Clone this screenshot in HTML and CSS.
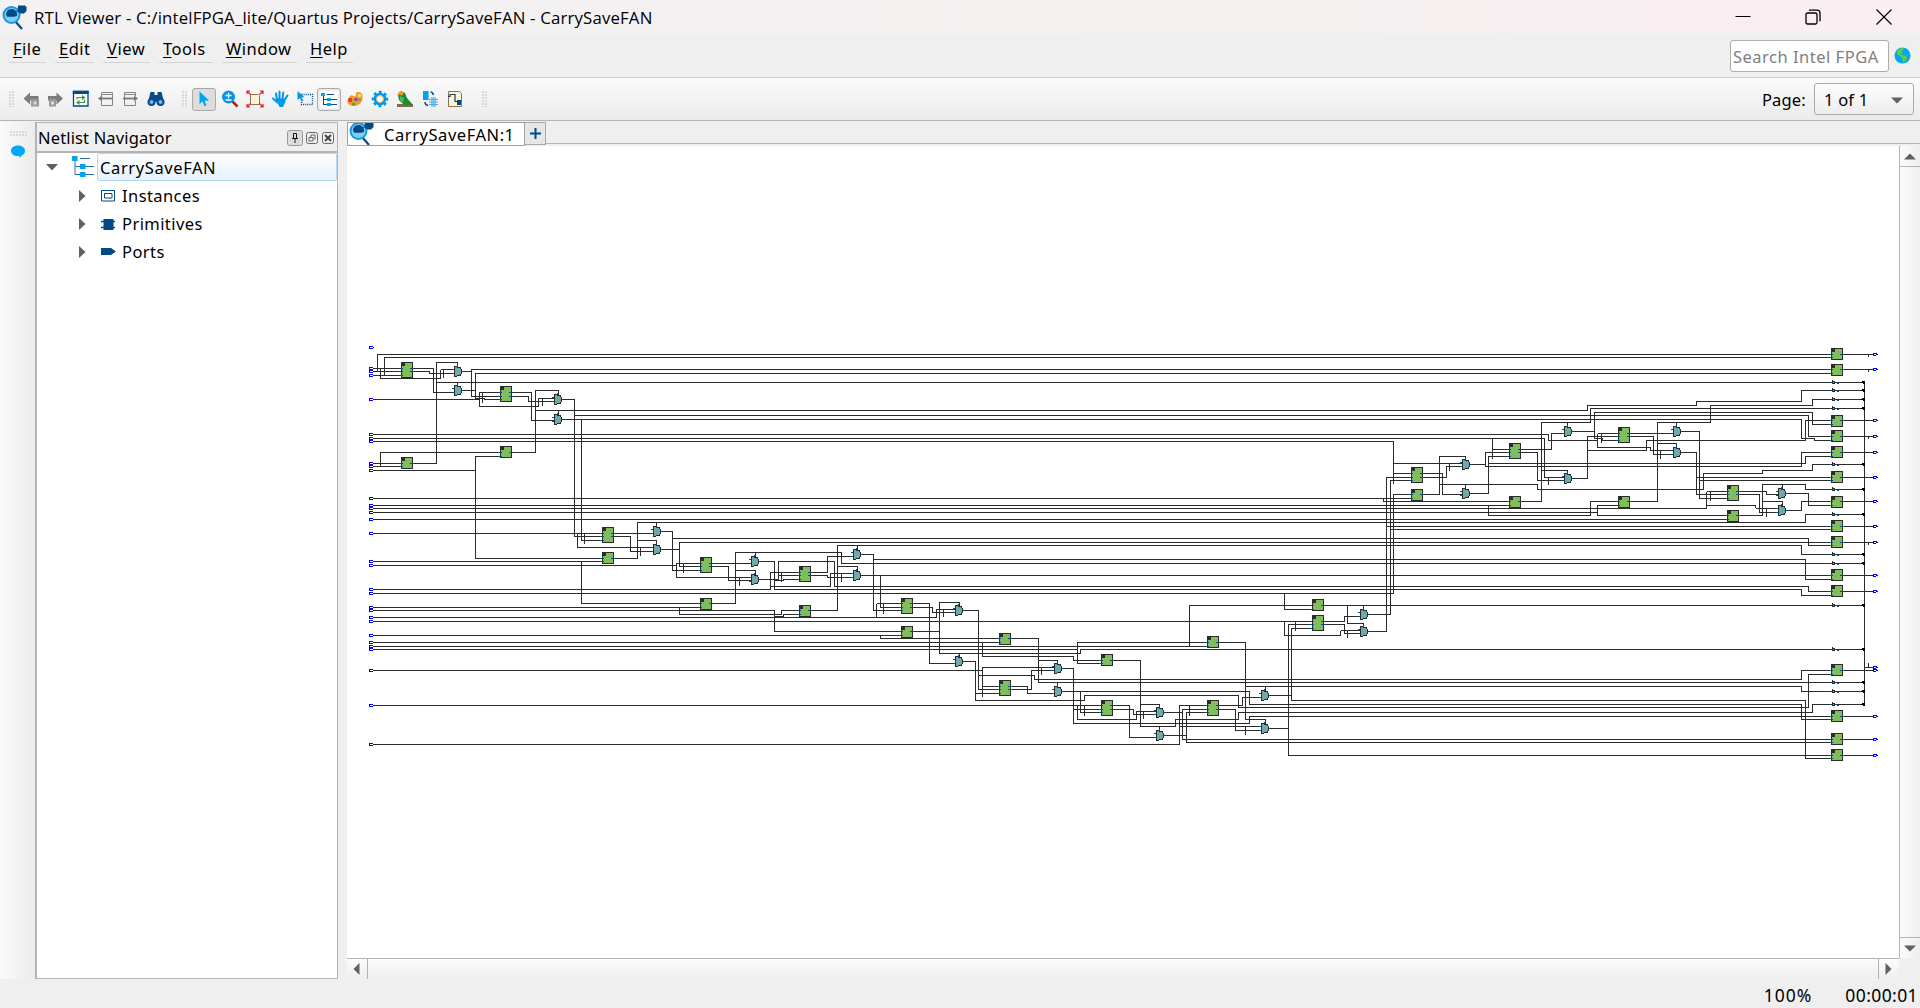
FILE: index.html
```html
<!DOCTYPE html>
<html lang="en">
<head>
<meta charset="utf-8">
<title>RTL Viewer - CarrySaveFAN</title>
<link rel="stylesheet" href="styles.css">
</head>
<body>
<svg class="defs" width="0" height="0">
  <defs>
    <symbol id="app-logo" viewBox="0 0 25 25">
      <path d="M13 16 20 24" stroke="#0a4b8c" stroke-width="2.2"/>
      <circle cx="9.500" cy="10" r="8" fill="#7fcdf5" stroke="#1598dc" stroke-width="2"/>
      <path d="M4 9.500a5.600 6 0 0 1 11-1v2.500l-3 .8H5z" fill="#004a86"/>
      <path d="M14 7 18 4" stroke="#0a4b8c"/>
      <path d="M16 .5h7l1.500 1.500v4L22 8.500h-4L15.500 6z" fill="#004a86"/>
    </symbol>
    <symbol id="tree-icon" viewBox="0 0 22 22">
      <path d="M3 5v13.500h5M3 10.500h5M8 2.500h10M13 10.500h9M13 18.500h9" fill="none" stroke="#2d6da3"/>
      <path d="M0 0h5.500v5H0zM8 8h5.500v5H8zM8 16h5.500v5H8z" fill="#00a3ee"/>
    </symbol>
  </defs>
</svg>

<header class="titlebar">
  <svg class="title-logo" width="25" height="25"><use href="#app-logo"/></svg>
  <span class="title-text">RTL Viewer - C:/intelFPGA_lite/Quartus Projects/CarrySaveFAN - CarrySaveFAN</span>
  <div class="window-controls">
    <svg width="16" height="16" viewBox="0 0 16 16"><path d="M.5 7.500h15" stroke="#000"/></svg>
    <svg width="16" height="16" viewBox="0 0 16 16" fill="none" stroke="#000" stroke-width="1.300"><rect x="1" y="4" width="11" height="11" rx="1.500"/><path d="M4 1.200h8a3 3 0 0 1 3 3v8"/></svg>
    <svg width="16" height="16" viewBox="0 0 16 16" stroke="#000" stroke-width="1.200"><path d="M.5.5l15 15M15.500.5l-15 15"/></svg>
  </div>
</header>

<nav class="menubar">
  <a class="menu m-file"><u>F</u>ile</a>
  <a class="menu m-edit"><u>E</u>dit</a>
  <a class="menu m-view"><u>V</u>iew</a>
  <a class="menu m-tools"><u>T</u>ools</a>
  <a class="menu m-window"><u>W</u>indow</a>
  <a class="menu m-help"><u>H</u>elp</a>
  <div class="search">Search Intel FPGA</div>
  <svg class="globe" width="17" height="17" viewBox="0 0 17 17"><circle cx="8.500" cy="8.500" r="8" fill="#00a8f5"/><path d="M3 4C4 2 7 1 9.500 1L9 3 7.500 4 9 6 6 7 8 8l5 1.500v2L9.500 16 8 11 5.500 8.500 3 7z" fill="#5fcf3f"/></svg>
</nav>

<div class="toolbar">
  <i class="grip"></i>
  <div class="tools first">
    <span class="tool"><svg width="20" height="20" viewBox="0 0 20 20"><path d="M2.500 9.500 9 3.500V7H17.500v4.500H9v4z" fill="#7c7c7c"/><path d="M10 10h8v7.500h-8z" fill="#999"/><path d="M12.500 12.500h3v3h-3z" fill="#ddd"/></svg></span>
    <span class="tool"><svg width="20" height="20" viewBox="0 0 20 20"><path d="M17 9.500 10.500 3.500V7H2v4.500h8.500v4z" fill="#7c7c7c"/><path d="M3 10h7v7.500H3z" fill="#999"/><path d="M5 12.500h3v3H5z" fill="#ddd"/></svg></span>
    <span class="tool"><svg width="18" height="18" viewBox="0 0 18 18"><path d="M1.500 1.500h14.500v14.500H1.500z" fill="#fff" stroke="#004a86" stroke-width="1.300"/><path d="M.8.800h15.900v3.200H.8z" fill="#004a86"/><path d="M5 9.500V7.500h6M12.500 9.500v3H6" fill="none" stroke="#3a983c" stroke-width="1.200"/><path d="M10 5l3.500 2.500L10 10zM7.500 10 4 12.500 7.500 15z" fill="#3a983c"/></svg></span>
    <span class="tool"><svg width="18" height="18" viewBox="0 0 18 18" fill="none" stroke="#858585"><path d="M4.500 6V2.500h11v13h-11V11M5 4.500h10"/><path d="M3 8.500h13" stroke-width="1.800" stroke="#777"/><path d="M1 8.500 5 5.500v6z" fill="#777" stroke="none"/></svg></span>
    <span class="tool"><svg width="18" height="18" viewBox="0 0 18 18" fill="none" stroke="#858585"><path d="M13.500 6V2.500h-11v13h11V11M3 4.500h10"/><path d="M1 8.500h12" stroke-width="1.800" stroke="#777"/><path d="M16 8.500 12 5.500v6z" fill="#777" stroke="none"/></svg></span>
    <span class="tool"><svg width="18" height="18" viewBox="0 0 18 18"><path d="M3.500 2h4v3h3V2h4L17 12H1z" fill="#0a4b8c"/><circle cx="4.500" cy="12" r="4" fill="#0a4b8c"/><circle cx="13.500" cy="12" r="4" fill="#0a4b8c"/><circle cx="4.500" cy="12" r="2" fill="#6cb8ea"/><circle cx="13.500" cy="12" r="2" fill="#6cb8ea"/></svg></span>
  </div>
  <i class="grip"></i>
  <div class="tools second">
    <span class="tool pressed"><svg width="18" height="18" viewBox="0 0 18 18"><path d="M4.500 1.500v12.500l3-2.700 2 5 2-.9-2-4.600L14 10.500z" fill="#00a3ee"/></svg></span>
    <span class="tool"><svg width="18" height="18" viewBox="0 0 18 18"><path d="m11 11 5.500 5.500" stroke="#b02020" stroke-width="2.500"/><circle cx="7.500" cy="7" r="6.500" fill="#0097e6"/><path d="M4.500 5.500h6M7.500 2.800v5.400M4.500 10h6" stroke="#fff" stroke-width="1.300"/></svg></span>
    <span class="tool"><svg width="18" height="18" viewBox="0 0 18 18"><path d="M4.500 4.500h8l1 1v9h-9z" fill="#fdf3d7" stroke="#8b7355"/><path d="M1 1l3.500 3.500M17 1l-3.500 3.500M1 17l3.500-3.500M17 17l-3.500-3.500M1 4V1h3M14 1h3v3M1 14v3h3M14 17h3v-3" fill="none" stroke="#e02020" stroke-width="1.200"/></svg></span>
    <span class="tool"><svg width="18" height="18" viewBox="0 0 18 18"><path d="m6 10-1-6.500M8.500 9V1.500M11.500 9l.7-6.500M13.500 10l3-4.500M6.500 12.500 2 8.500" stroke="#0097e6" stroke-width="2" stroke-linecap="round"/><path d="M5 8.500h9l.5 3-2.500 5.500H8.500z" fill="#0097e6"/></svg></span>
    <span class="tool"><svg width="18" height="18" viewBox="0 0 18 18"><path d="M5.500 4.500h11v10h-11z" fill="none" stroke="#0a4b8c" stroke-width="1.300" stroke-dasharray="1 1.100"/><path d="M1.500 1v9l2.500-2 1.800 3.500 1.400-.8-1.700-3.500H8.500z" fill="#0097e6"/></svg></span>
    <span class="tool pressed light"><svg width="18" height="17" viewBox="0 0 18 17" shape-rendering="crispEdges"><path d="M0 0h18v17H0z" fill="#fff"/><path d="M3.500 5v8.500h4M4 8.500h4M7 3.500h7M11 8.500h6M11 13.500h6" fill="none" stroke="#0a4b8c"/><path d="M1 2h4v3H1zM7 7h4v3H7zM7 12h4v3H7z" fill="#00a3ee"/></svg></span>
    <span class="tool"><svg width="18" height="18" viewBox="0 0 18 18"><path d="M11.500 2C17 1 18 8 15 12.500s-10 4.500-12.500 1.500 0-5.500 1.500-8 4.500 1.500 5.500 0-.5-3.500 2-4z" fill="#f59a23"/><circle cx="4.300" cy="10" r="2.200" fill="#e23a2e"/><circle cx="10" cy="9.500" r="1.800" fill="#7a4ec0"/><circle cx="7.500" cy="14" r="1.600" fill="#48a848"/><circle cx="13.500" cy="5.500" r="1.800" fill="#ffd95a"/><circle cx="13.500" cy="9.500" r="1.300" fill="#3aa0e0"/></svg></span>
    <span class="tool"><svg width="18" height="18" viewBox="0 0 18 18"><circle cx="9" cy="9" r="7" fill="none" stroke="#0097e6" stroke-width="2.500" stroke-dasharray="2.900 2.600" stroke-dashoffset="1.450"/><circle cx="9" cy="9" r="4.900" fill="none" stroke="#0097e6" stroke-width="2.800"/><circle cx="9" cy="9" r="3.400" fill="#fff" stroke="#e6b65a"/></svg></span>
    <span class="tool"><svg width="18" height="18" viewBox="0 0 18 18"><path d="M1 14h16v3H1z" fill="#8b6350"/><path d="M2 5 5 1l4 2 2 5 6 7H8L3 10z" fill="#1f8a36"/><path d="M1 4.500 4 1l4 1.500-2 3z" fill="#f29a1f"/><path d="M4 6l4 2-1 5-3-3z" fill="#4cc04c"/></svg></span>
    <span class="tool"><svg width="18" height="18" viewBox="0 0 18 18"><path d="M2 1h5.500v9H2z" fill="#00a3ee"/><path d="M10 7h5v10h-5z" fill="#7fcdf5"/><path d="M8 9.500h9M8 12h9M8 14.500h9" stroke="#58a8dc"/><path d="M9.500 2c2 0 2.500 1 3 3M4 12c0 2 1 3 3 3.500" fill="none" stroke="#0a4b8c" stroke-width="1.500"/></svg></span>
    <span class="tool"><svg width="18" height="18" viewBox="0 0 18 18"><path d="M2.500 1.500h11l2 2v13h-13z" fill="#fdf3d7" stroke="#8b7355"/><path d="M2 6.500h2v-2h5v7h6" fill="none" stroke="#223b55" stroke-width="1.200"/><path d="M11 10h4v5h-4z" fill="#004a86"/></svg></span>
  </div>
  <i class="grip"></i>
  <label class="page-label">Page:</label>
  <div class="page-select"><span>1 of 1</span><svg width="12" height="7"><path d="M0 .5h12L6 6.500z" fill="#606060"/></svg></div>
</div>

<main class="workspace">
  <aside class="dock-strip">
    <i class="grip-h"></i>
    <svg width="16" height="14" viewBox="0 0 16 14"><path d="M8 .5c4 0 7 2.200 7 5.200 0 2.500-1.500 4-3.500 4.800L10 13l-.8-2C4 11.500 1 9 1 5.700 1 2.700 4 .5 8 .5z" fill="#00a8f5"/></svg>
  </aside>

  <section class="navigator">
    <div class="nav-header">
      <span class="nav-title">Netlist Navigator</span>
      <svg class="pin" width="16" height="16" viewBox="0 0 16 16"><rect x=".5" y=".5" width="15" height="15" rx="2" fill="#dcdcdc" stroke="#999"/><path d="M6.500 3.500h3v5h-3zM5 8.500h6M8 9v4" fill="none" stroke="#111"/></svg>
      <svg width="12" height="12" viewBox="0 0 12 12" fill="none" stroke="#666"><rect x=".5" y=".5" width="11" height="11" rx="2"/><path d="M3 5.500h4v3.500H3zM5 5V3h4v4H7.500"/></svg>
      <svg width="12" height="12" viewBox="0 0 12 12" fill="none" stroke="#666"><rect x=".5" y=".5" width="11" height="11" rx="2"/><path d="M3 3l6 6M9 3 3 9" stroke-width="1.900" stroke="#444"/></svg>
    </div>
    <div class="tree">
      <div class="row root">
        <svg class="open-arrow" width="12" height="7"><path d="M0 0h12L6 6.500z" fill="#606060"/></svg>
        <svg class="tree-glyph" width="22" height="22"><use href="#tree-icon"/></svg>
        <span class="selected">CarrySaveFAN</span>
      </div>
      <div class="row"><svg class="arrow" width="7" height="12"><path d="M0 0v12l6.500-6z" fill="#606060"/></svg><svg width="15" height="13" fill="#fff" stroke="#004a86"><path d="M.5.5h13v10.500H.5zM3.500 3.500h7.500v4.500H3.500z"/></svg><span>Instances</span></div>
      <div class="row"><svg class="arrow" width="7" height="12"><path d="M0 0v12l6.500-6z" fill="#606060"/></svg><svg width="15" height="13"><path d="M2.500 1h10v11h-10z" fill="#004a86"/><path d="M0 3.500h14M0 9.500h14" stroke="#004a86" stroke-width="1.300"/></svg><span>Primitives</span></div>
      <div class="row"><svg class="arrow" width="7" height="12"><path d="M0 0v12l6.500-6z" fill="#606060"/></svg><svg width="15" height="13"><path d="M0 2h10l5 3.500L10 9H0z" fill="#004a86"/></svg><span>Ports</span></div>
    </div>
  </section>

  <section class="viewer">
    <div class="tabs">
      <div class="tab"><svg width="25" height="24"><use href="#app-logo" y="-2" width="25" height="25"/></svg><span>CarrySaveFAN:1</span></div>
      <div class="tab-add"><svg width="11" height="11"><path d="M5.500 0v11M0 5.500h11" stroke="#004a86" stroke-width="2"/></svg></div>
      <div class="tab-rest"></div>
    </div>
    <div class="canvas-grid">
      <svg class="schematic" id="schematic" width="1552" height="812" viewBox="347 146 1552 812" shape-rendering="crispEdges"></svg>
      <div class="vscroll">
        <span><svg width="12" height="7"><path d="M0 6.500h12L6 .5z" fill="#606060"/></svg></span>
        <i></i>
        <span><svg width="12" height="7"><path d="M0 .5h12L6 6.500z" fill="#606060"/></svg></span>
      </div>
      <div class="hscroll">
        <span><svg width="7" height="12"><path d="M6.500 0v12L.5 6z" fill="#606060"/></svg></span>
        <i></i>
        <span><svg width="7" height="12"><path d="M.5 0v12l6-6z" fill="#606060"/></svg></span>
      </div>
    </div>
  </section>
</main>

<footer class="statusbar"><span class="zoom">100%</span><span class="time">00:00:01</span></footer>
<script src="schematic.js"></script>
</body>
</html>
```
FILE: styles.css
```css
* { box-sizing: border-box; }
body {
  margin: 0;
  width: 1920px;
  height: 1008px;
  overflow: hidden;
  display: flex;
  flex-direction: column;
  background: #efefef;
  color: #000;
  font: 16.5px/20px "Noto Sans", "Open Sans", sans-serif;
  letter-spacing: 0.5px;
  white-space: nowrap;
}
svg { display: block; flex: none; }
.defs { position: absolute; }

.titlebar {
  height: 34px;
  flex: none;
  display: flex;
  align-items: center;
  background: linear-gradient(90deg, #f3f1f2, #f4f0f0 70%, #f9eef2 90%);
}
.title-logo { margin: 0 7px 0 2px; }
.title-text {
  padding-top: 1px;
  font-family: "Open Sans", "Noto Sans", sans-serif;
  font-size: 16.8px;
  letter-spacing: 0.17px;
}
.window-controls { margin-left: auto; display: flex; gap: 55px; padding-right: 28px; }
.window-controls svg:first-child { margin-right: -1px; margin-left: 1px; }

.menubar {
  height: 44px;
  flex: none;
  display: flex;
  align-items: flex-start;
  gap: 9px;
  padding: 5px 9px 0;
  border-bottom: 1px solid #d0d0d0;
}
.menu {
  height: 24px;
  padding: 0 0 0 4px;
  line-height: 19px;
  border-bottom: 1px solid #d4d4d4;
}
.m-file { width: 37px; }
.m-edit { width: 39px; }
.m-view { width: 47px; }
.m-tools { width: 54px; }
.m-window { width: 75px; }
.m-help { width: 47px; }
.menu u { text-decoration-thickness: 1px; text-underline-offset: 2px; }
.search {
  width: 159px;
  height: 32px;
  margin: 1px -4px 0 auto;
  padding: 0 2px;
  line-height: 32px;
  background: #fff;
  border: 1px solid #adadad;
  border-radius: 3px;
  color: #808080;
}
.globe { margin-top: 8px; }

.toolbar {
  height: 43px;
  flex: none;
  display: flex;
  align-items: center;
  padding: 0 6px 0 9px;
  background: linear-gradient(#fbfbfb, #ebebeb);
  border-bottom: 1px solid #b4b4b4;
}
.grip {
  flex: none;
  width: 5px;
  height: 16px;
  background: radial-gradient(circle at 1px 1px, #cfcfcf 0.600px, transparent 1px) 0 0 / 3px 3px;
}
.tools { display: flex; margin: 0 15px 0 5px; }
.tools.first { margin-left: 4px; margin-right: 14px; }
.tool {
  width: 25px;
  height: 23px;
  display: flex;
  align-items: center;
  justify-content: center;
}
.pressed { background: #dcdcdc; border: 1px solid #a9a9a9; border-radius: 3px; width: 24px; margin-right: 1px; }
.pressed.light { background: #ececec; }
.page-label { margin-left: auto; margin-right: 8px; padding-top: 2px; letter-spacing: 0.2px; }
.page-select {
  width: 100px;
  height: 32px;
  display: flex;
  align-items: center;
  justify-content: space-between;
  padding: 2px 10px 0 9px;
  border: 1px solid #a9a9a9;
  border-radius: 3px;
  background: linear-gradient(#fdfdfd, #ededed);
  letter-spacing: 0.2px;
}

.workspace { flex: 1; display: flex; min-height: 0; }
.dock-strip {
  width: 35px;
  background: linear-gradient(90deg, #fafafa, #ececec);
  padding: 10px 0 0 10px;
}
.dock-strip svg { margin-top: 8px; }
.grip-h {
  display: block;
  width: 17px;
  height: 6px;
  background: radial-gradient(circle at 1px 1px, #cfcfcf 0.600px, transparent 1px) 0 0 / 3px 3px;
}
.navigator {
  width: 303px;
  margin: 1px 9px 0 0;
  display: flex;
  flex-direction: column;
  border: 1px solid #b4b4b4;
  border-left-width: 2px;
}
.nav-header {
  height: 30px;
  flex: none;
  display: flex;
  align-items: center;
  gap: 4px;
  padding: 1px 3px 0 1px;
  border-bottom: 2px solid #b4b4b4;
}
.nav-title { margin-right: auto; letter-spacing: 0.15px; }
.pin { margin-right: -1px; }
.tree { flex: 1; background: #fff; }
.row { height: 28px; display: flex; align-items: center; padding: 2px 0 0 42px; letter-spacing: 0.42px; }
.row span { margin-left: 6px; }
.row .arrow { margin-right: 15px; }
.row.root { padding: 0 0 0 9px; letter-spacing: 0.6px; }
.open-arrow { margin-right: 14px; }
.row.root .selected {
  flex: 1;
  height: 28px;
  margin-left: 3px;
  padding-left: 2px;
  line-height: 27px;
  border: 1px solid #b5d7ef;
  border-radius: 2px;
  background: linear-gradient(#fbfdff, #e6f2fc);
}

.viewer { flex: 1; display: flex; flex-direction: column; min-width: 0; }
.tabs { height: 25px; flex: none; display: flex; padding-top: 1px; }
.tab {
  width: 178px;
  height: 24px;
  display: flex;
  align-items: center;
  overflow: hidden;
  background: #fff;
  border: 1px solid #a0a0a0;
  padding: 2px 0 0 2px;
  letter-spacing: 0.55px;
}
.tab svg { margin-left: -1px; }
.tab span { margin-left: 10px; }
.tab-add {
  width: 21px;
  height: 23px;
  display: flex;
  align-items: center;
  justify-content: center;
  background: #e6e6e6;
  border: 1px solid #a9a9a9;
  border-left: 0;
}
.tab-rest { flex: 1; height: 22px; border-bottom: 1px solid #b4b4b4; }
.canvas-grid {
  display: grid;
  grid-template: 812px 21px / 1552px 21px;
}
.schematic { background: #fff; }
.vscroll, .hscroll { display: flex; }
.vscroll { flex-direction: column; border-left: 1px solid #b4b4b4; background: linear-gradient(90deg, #fcfcfc, #eee); }
.hscroll { border-top: 1px solid #b4b4b4; background: linear-gradient(#fcfcfc, #eee); }
.vscroll i, .hscroll i { flex: 1; }
.vscroll i { border: solid #b4b4b4; border-width: 1px 0; }
.hscroll i { border: solid #b4b4b4; border-width: 0 1px; }
.vscroll span, .hscroll span { flex: none; width: 20px; height: 20px; display: flex; align-items: center; justify-content: center; }
.vscroll svg { margin-right: 1px; }
.hscroll svg { margin-right: 1px; }

.statusbar {
  height: 29px;
  flex: none;
  display: flex;
  justify-content: flex-end;
  align-items: center;
  padding: 2px 2px 0 0;
  font-size: 17.5px;
}
.zoom { margin-right: 33px; letter-spacing: 1px; }
.time { letter-spacing: 0.4px; }

.wire { stroke: #2b2b2b; }
.pin-line { stroke: #0b4a7a; }
.block { fill: #80bd5c; stroke: #2b2b2b; }
.corner { fill: #2b2b2b; }
.gate { fill: #70a9ac; stroke: #2b2b2b; }
.shade { stroke: #999; }
.port { stroke: #0000f0; }
.bus { fill: #000; }
```
FILE: schematic.js
```js
const wires = `
M377 371V354H1831 M384 375V357H1831 M373 368H401 M373 371H401 M373 375H401
M380 368V378H440V370 M441 369H454 M413 368H433V392H454 M413 371H429V373H454 M443 370V377
M413 463H436V362H457V366 M436 382H1831 M457 382V385 M462 371H471 M1831 369H471V396H500
M462 390H475 M1831 373H475V398H484V399H500 M373 399H479 M500 392H479V406H538V398H554
M482 392V402 M512 392H531V420H554 M512 396H528V401H554 M512 452H535V390H558V394
M535 410H1587V405H1696V401H1801V390H1831 M558 410V414 M542 398V405
M562 399H574V536H602 M574 415H1808V436H1831 M562 419H1801V438H1814V440H1831 M581 419V540H602
M380 466V452H500 M475 470V456H500 M373 470H475V558H602 M373 463H401 M373 466H401
M373 434H1548V440H1597 M1598 433H1618 M1597 434V447H1650V450H1673
M373 438H1544V477H1564 M373 441H1393V483 M373 498H1411 M373 505H1509
M373 508H1706V492 M373 512H1597 M373 519H1727
M373 533H602 M577 533V547H653 M584 533V543 M614 533H653 M614 536H630V551H653 M640 547V555
M614 558H637V522H1805V514H1831 M656 522V526 M637 540H656V544
M661 531H672V570H700 M672 538H1808V545H1831 M661 549H679 M1831 542H679V566H700
M373 565H676 M700 563H676V577H751 M683 563V572 M373 561H602 M581 561V603H700
M712 563H751 M712 566H728V580H751 M739 577V585 M712 603H735V552H841V563H1831
M755 552V556 M735 570H755V574 M759 561H774V589H1801V595H1831 M373 589H770V573 M770 572H799
M759 579H778V561H834V586H1808V591H1831 M774 580H783V579H799 M778 575H799 M770 586H830V573H853
M781 572V581 M811 572H827V556H853 M811 575H827V577H853 M811 610H837V545H1801V554H1831
M857 545V549 M837 566H857V570 M861 554H873V610H901 M873 559H1805V579H1831
M841 573V581 M861 575H1831 M880 575V607H901 M877 603H901 M876 604V617 M883 603V613
M373 607H700 M679 607V614H781V610H799 M373 610H774V631H901 M774 616H783V614H799
M373 617H936V609H955 M373 593H1393V494H1411 M373 621H1312 M373 635H901 M880 635V638H999
M373 642H999 M373 646H1207 M373 649H1077
M913 603H929V663H955 M913 607H932V612H955 M943 609V616 M913 631H939 M959 605V602H939V653H1080V649H1831
M959 653V656 M963 610H978V689H999 M978 675H1034V679H1801V670H1831
M982 642V656H1073V660H1101 M1011 638H1038V682H1831 M1057 682V686 M1038 660H1057V663
M1207 642H1077V663H1101 M963 661H975V700H1084V695H1238V707H1808V674H1831 M975 693H999
M373 670H982 M1054 667H982V696 M982 686H999 M1011 686H1027V693H1054 M1011 689H1031V670H1054
M1041 667V674 M1062 668H1073V723H1249V716H1831 M1073 709H1101
M1062 691H1249V704H1801V719H1831 M1080 691V712H1101
M373 705H1101 M1077 705V719H1136V711H1156 M1084 706V715 M373 744H1179V705H1207 M1179 726H1261
M1189 646V605H1312 M1284 593V609H1312 M1284 621V635H1340V631 M1341 630H1360
M1312 624H1288V755H1831 M1312 628H1291V700H1805V758H1831 M1295 621V630
M1324 621H1344V616H1360 M1324 624H1344V633H1360 M1324 605H1831 M1347 605V623H1363V626 M1363 605V609 M1347 631V637
M1368 614H1390V480H1411 M1368 631H1386V477H1411
M1219 642H1245V719H1265V723 M1245 686H1801V691H1831 M1265 686V690
M1113 660H1140V726H1175V719H1238V712H1812V704H1831 M1140 704H1159V707 M1159 726V730
M1113 705H1129V737H1156 M1113 709H1133V714H1156 M1143 711V718
M1164 712H1182 M1207 709H1182V739H1831 M1164 735H1186 M1207 712H1186V742H1831 M1189 705V715
M1219 705H1242V697H1261 M1219 709H1235V730H1261 M1245 727V734 M1269 695H1291 M1269 728H1288
M1492 438V458 M1492 449H1509 M1393 473H1411 M1393 463H1462 M1383 498V501H1509
M1423 473H1442V494H1462 M1423 477H1446V466H1462 M1423 494H1439V456H1465V459
M1439 484H1537V489H1703V473H1762V470H1812V464H1831 M1465 484V488 M1449 463V470
M1470 464H1485 M1509 452H1485V466H1801V452H1831 M1470 493H1488V456H1509 M1488 463H1805V456H1831
M1521 449H1551V433H1564 M1521 452H1537V480H1564 M1521 501H1541V422H1590V408H1831
M1567 422V426 M1541 470H1567V474 M1572 431H1594 M1831 424H1812V412H1594V438H1602V440H1618
M1548 477V484 M1572 478H1587V436H1618 M1587 450H1646V440H1805V420H1831 M1601 433V442
M1630 433H1673 M1630 436H1653V454H1673 M1618 501H1590V515H1488V505 M1618 505H1597V515H1727
M1630 501H1657V422H1710V405H1812V399H1831 M1676 422V426 M1657 443H1676V447
M1386 526H1831 M1386 526V477 M1390 529H1831 M1681 431H1699V498H1727 M1699 480H1831
M1681 452H1696V494H1727 M1696 477H1831 M1660 450V458
M1707 491H1727 M1706 505H1755V507 M1756 508H1778 M1710 491V500
M1739 491H1766V494H1778 M1739 494H1759V512H1778 M1766 508V516
M1739 515H1762V484H1805V489H1831 M1782 484V488 M1762 501H1782V505
M1786 493H1808V505H1831 M1786 510H1801V501H1831
M1864 382V704 M1864 667H1872 M1868 663V667 M1868 354V356 M1868 369V371 M1868 436V438 M1868 542V544`;

// x, y, height, input rows, output rows
const blocks = [
  [401,362,16,[368,371,375],[368,371]], [401,457,12,[463,466],[463]],
  [500,386,16,[392,396,399],[392,396]], [500,446,12,[452,456],[452]],
  [602,527,16,[533,536,540],[533,536]], [602,552,12,[558,561],[558]],
  [700,557,16,[563,566,570],[563,566]], [700,598,12,[603,607],[603]],
  [799,566,16,[572,575,579],[572,575]], [799,605,12,[610,614],[610]],
  [901,598,16,[603,607,610],[603,607]], [901,626,12,[631,635],[631]],
  [999,633,12,[638,642],[638]], [999,680,16,[686,689,693],[686,689]],
  [1101,654,12,[660,663],[660]], [1101,700,16,[705,709,712],[705,709]],
  [1207,636,12,[642,646],[642]], [1207,700,16,[705,709,712],[705,709]],
  [1312,599,12,[605,609],[605]], [1312,615,16,[621,624,628],[621,624]],
  [1411,467,16,[473,477,480],[473,477]], [1411,489,12,[494,498],[494]],
  [1509,443,16,[449,452,456],[449,452]], [1509,496,12,[501,505],[501]],
  [1618,427,16,[433,436,440],[433,436]], [1618,496,12,[501,505],[501]],
  [1727,485,16,[491,494,498],[491,494]], [1727,510,12,[515,519],[515]],
  [1831,348,12,[354,357],[354]], [1831,364,12,[369,373],[369]],
  [1831,415,12,[420,424],[420]], [1831,430,12,[436,440],[436]],
  [1831,446,12,[452,456],[452]], [1831,471,12,[477,480],[477]],
  [1831,496,12,[501,505],[501]], [1831,520,12,[526,529],[526]],
  [1831,536,12,[542,545],[542]], [1831,569,12,[575,579],[575]],
  [1831,585,12,[591,595],[591]], [1831,664,12,[670,674],[670]],
  [1831,710,12,[716,719],[716]], [1831,733,12,[739,742],[739]],
  [1831,749,12,[755,758],[755]]
];

// x, top of each multiplexer
const muxes = [
  [454,366],[454,385],[554,394],[554,414],[653,526],[653,544],[751,556],[751,574],
  [853,549],[853,570],[955,605],[955,656],[1054,663],[1054,686],[1156,707],[1156,730],
  [1261,690],[1261,723],[1360,609],[1360,626],[1462,459],[1462,488],[1564,426],[1564,473],
  [1673,426],[1673,447],[1778,488],[1778,505]
];

const inverters = [382,390,399,408,464,489,514,554,563,605,649,682,691,704];
const inputs = [347,368,371,375,399,434,438,441,463,466,470,498,505,508,512,519,533,561,565,
  589,593,607,610,617,621,635,642,646,649,670,705,744];
const outputs = [354,369,420,436,452,477,501,526,542,575,591,667,670,716,739,755];

const parts = [];
const stroke = (cls, d) => parts.push(`<path class="${cls}" fill="none" stroke-linecap="square" d="${d}"/>`);

stroke('wire', wires);
for (const [x, y, h, ins, outs] of blocks) {
  parts.push(`<rect class="block" x="${x}" y="${y}" width="11" height="${h - 1}"/>`);
  parts.push(`<rect class="corner" x="${x - .5}" y="${y - .5}" width="4" height="4"/>`);
  stroke('pin-line', ins.map(r => `M${x - 2} ${r}h3`).join('') + outs.map(r => `M${x + 9} ${r}h3`).join(''));
  if (x === 1831) stroke('wire', outs.map(r => `M${x + 13} ${r}H1872`).join(''));
}
for (const [x, y] of muxes) {
  stroke('shade', `M${x + 1} ${y + 10}h1M${x + 4} ${y + 9}h1`);
  parts.push(`<path class="gate" d="M${x} ${y}h2l1 1h3v1l1 1v4l-1 1v1h-3l-1 1h-2z"/>`);
  stroke('pin-line', `M${x - 2} ${y + 3}h1M${x - 2} ${y + 7}h1M${x + 8} ${y + 5}h0M${x + 3} ${y - 1}v1`);
}
for (const r of inverters) {
  stroke('wire', `M1835 ${r}H1862`);
  parts.push(`<path class="gate" d="M1831.5 ${r - 2}v3h2v-2z"/>`);
  stroke('pin-line', `M1829 ${r}h1M1835 ${r}h1M1837 ${r + 1}h1`);
  parts.push(`<path class="bus" d="M1860.500 ${r - .5}h1v-1h3v3h-2v-1h-2z"/>`);
}
stroke('port', inputs.map(r => `M372 ${r - 1}h-3v2h3`).join('') + 'M373 347h0' +
  outputs.map(r => `M1876 ${r - 1}h-3v2h2M1876 ${r}h1`).join(''));

document.getElementById('schematic').innerHTML = `<g transform="translate(.5 .5)">${parts.join('')}</g>`;
```
